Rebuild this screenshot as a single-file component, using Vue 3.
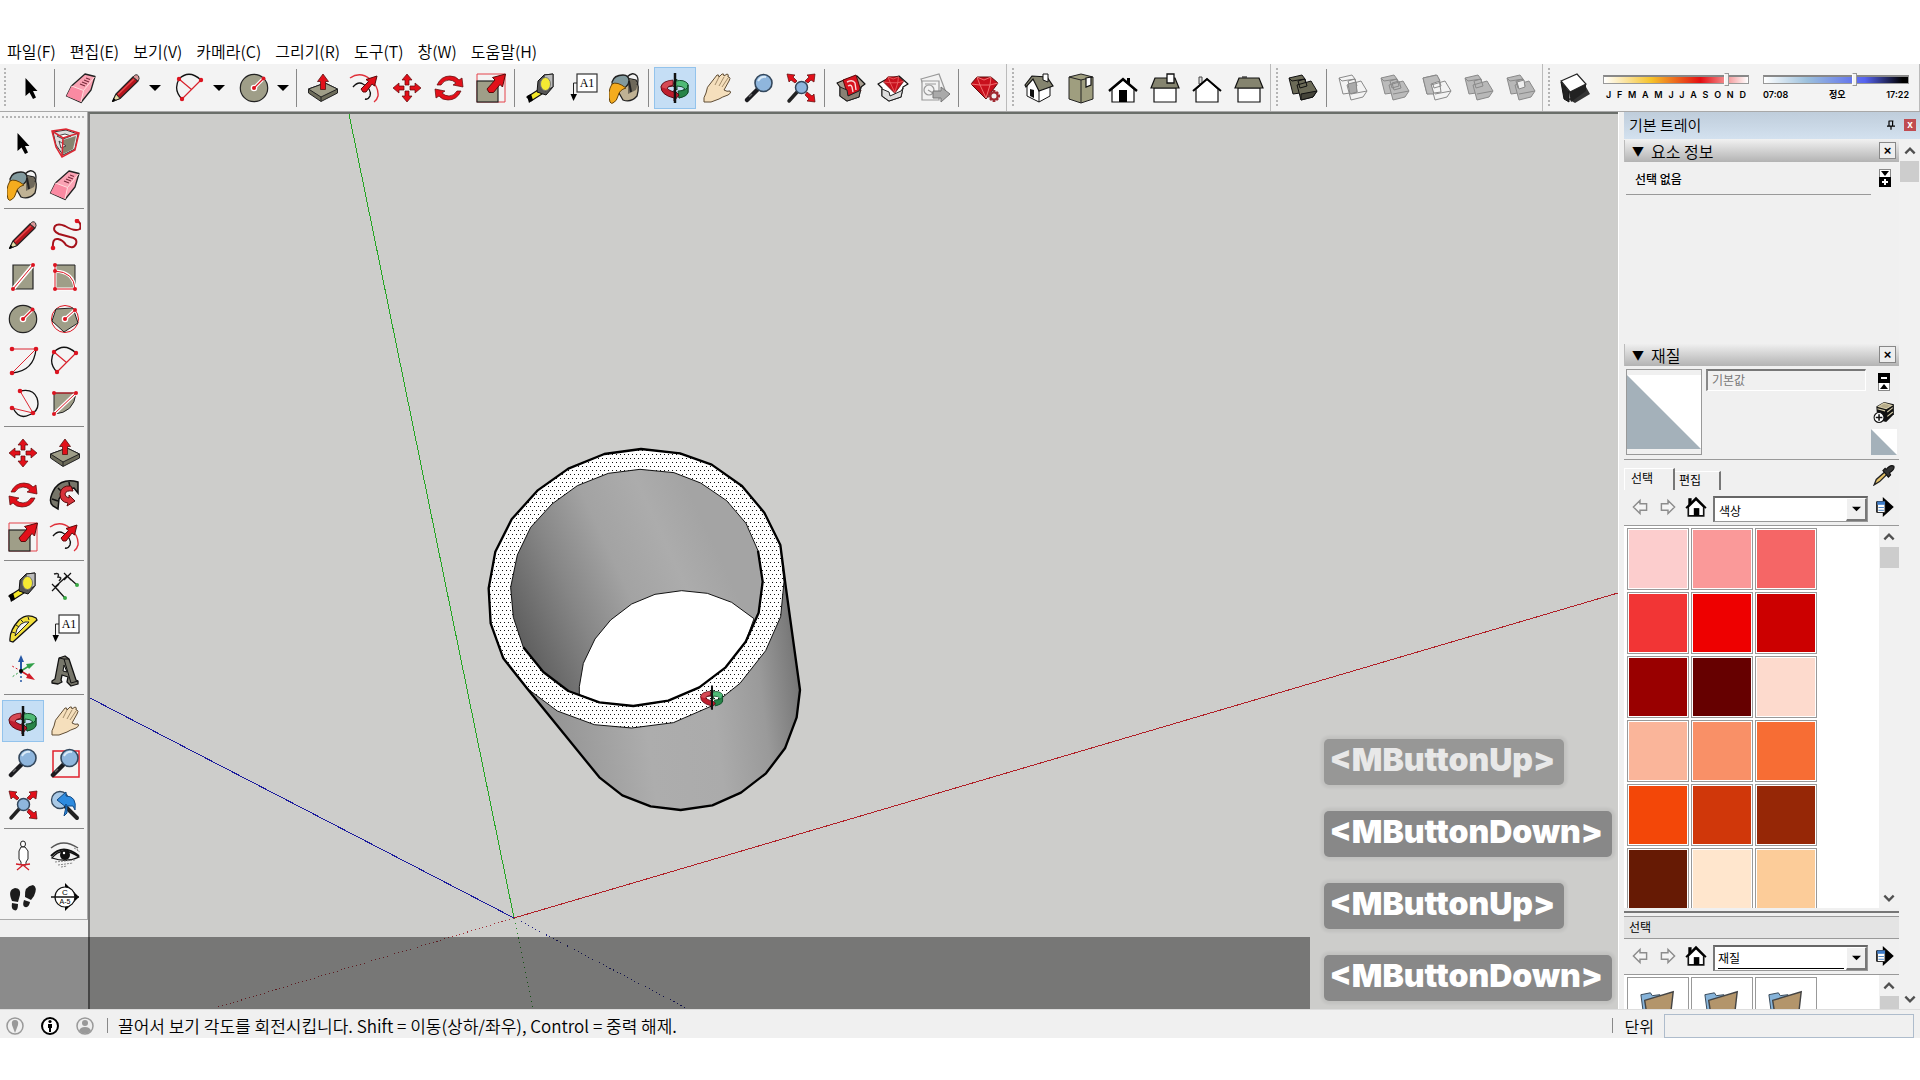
<script setup>
import { ref } from 'vue'

const menus = ['파일(F)', '편집(E)', '보기(V)', '카메라(C)', '그리기(R)', '도구(T)', '창(W)', '도움말(H)']

const bars = [
  [
    ['select'],
    ['eraser', 'pencil+', 'arc+', 'circle+'],
    ['push', 'offset', 'move', 'rotate', 'scale'],
    ['tape', 'label', 'bucket'],
    ['orbit', 'hand', 'zoom', 'extents'],
    ['warehouse', 'extwarehouse', 'share'],
    ['ruby'],
  ],
  [['iso', 'top', 'front', 'right', 'back', 'left']],
  [['shell'], ['intersect', 'union', 'subtract', 'trim', 'split']],
]

const palette = [
  ['select', 'component', 'bucket', 'eraser'],
  ['pencil', 'freehand', 'rect', 'rotrect', 'circle', 'polygon', 'arc1', 'arc', 'arc3', 'pie'],
  ['move', 'push', 'rotate', 'follow', 'scale', 'offset'],
  ['tape', 'dim', 'protractor', 'label', 'axes', 'text3d'],
  ['orbit', 'hand', 'zoom', 'zoomwin', 'extents', 'previous'],
  ['position', 'look', 'walk', 'section'],
]

const months = 'JFMAMJJASOND'.split('')
const month = ref(86)
const time = ref(63)

const colors = [
  '#fccdcd', '#fa9999', '#f56666', '#f23535', '#ee0000', '#cc0000',
  '#990000', '#660000', '#fddacd', '#fab59a', '#f99067', '#f76d34',
  '#f34708', '#d0370a', '#962706', '#661a04', '#ffe6cd', '#fccc99',
]

const keys = [
  { text: '<MButtonUp>', faded: true },
  { text: '<MButtonDown>' },
  { text: '<MButtonUp>' },
  { text: '<MButtonDown>' },
]
</script>

<template>
  <svg class="sprite" aria-hidden="true">
    <symbol id="i-select" viewBox="0 0 32 32"><path d="M10.500 6V24L14.500 20.500L18 27L21 25.500L18 19H22.500Z" fill="#000" /></symbol>
    <symbol id="i-eraser" viewBox="0 0 32 32">
      <path d="M20 2L30 4.500L26 18L16 30.500L1.500 24L6.500 14Z" fill="#fba3b4" stroke="#222" stroke-width="1.300" stroke-linejoin="round" />
      <path d="M6.500 14L18.500 18.500L16 30L1.500 24Z" fill="#fa8aa2" />
      <path d="M6.500 14L18.500 18.500L29.500 5M18.500 18.500L16 30" fill="none" stroke="#fdd" stroke-width="1" />
      <path d="M15 12l5 2m-3-4l5 2m-3-4l5 2m-3-4l4 1.500" stroke="#7a2c3c" stroke-width="1.200" fill="none" />
    </symbol>
    <symbol id="i-pencil" viewBox="0 0 32 32">
      <path d="M2.500 29.500L6 22L23 5L28 9L10 26.500Z" fill="#b5141c" stroke="#222" stroke-width="1.200" stroke-linejoin="round" />
      <path d="M8 22.500L24 7" stroke="#e8474a" stroke-width="1.500" />
      <path d="M23 5Q26 1 28.500 4Q30 7 28 9Z" fill="#d99" stroke="#333" />
      <path d="M2.500 29.500L6 22L10 26.500Z" fill="#e5dba5" stroke="#222" /><path d="M2 30l1.500-4 2.500 2z" />
    </symbol>
    <symbol id="i-arc" viewBox="0 0 32 32">
      <path d="M8 27Q-1 18 5 7Q15 -3 27 8" fill="none" stroke="#111" stroke-width="1.300" />
      <path d="M27 8L8 27M5 7L17.500 17.500" stroke="#d8222c" stroke-width="1.200" />
      <g fill="#dc1420"><circle cx="5" cy="7" r="2.200" /><circle cx="27" cy="8" r="2.200" /><circle cx="8" cy="27" r="2.200" /></g>
    </symbol>
    <symbol id="i-circle" viewBox="0 0 32 32">
      <circle cx="16" cy="16" r="13.700" fill="#9f9e88" stroke="#222" stroke-width="1.200" />
      <path d="M16 16L25.500 6.500" stroke="#fff" stroke-width="3.500" /><circle cx="16" cy="16" r="3.300" fill="#fff" />
      <path d="M16 16L25.500 6.500" stroke="#dc1420" stroke-width="1.200" />
      <g fill="#dc1420"><circle cx="16" cy="16" r="2" /><circle cx="25.500" cy="6.500" r="2" /></g>
    </symbol>
    <symbol id="i-push" viewBox="0 0 32 32">
      <path d="M1.500 17L18 11L30.500 17V21L14 29.500L1.500 21Z" fill="#6d6c5a" stroke="#222" stroke-linejoin="round" />
      <path d="M1.500 17L18 11L30.500 17L14 25Z" fill="#9f9e88" stroke="#222" stroke-linejoin="round" /><path d="M14 25V29" stroke="#222" />
      <path d="M13.500 17.500V9.500H10.500L16 2L21.500 9.500H18.500V17.500Z" fill="#e2101a" stroke="#511" stroke-width=".8" />
    </symbol>
    <symbol id="i-bigarrow" viewBox="0 0 32 32"><path d="M12 17L20 8L17.500 5.500L30.500 2L27.500 15L25 12.500L18.500 20.500H14Z" fill="#e2101a" stroke="#5a0a0a" stroke-linejoin="round" /></symbol>
    <symbol id="i-offset" viewBox="0 0 32 32">
      <path d="M1 6Q11 -1 21 7Q30 15 29 24Q28 28 25 30" fill="none" stroke="#e0303a" stroke-width="1.400" />
      <path d="M4 15Q9 9 14 12Q23 17 21 24Q19 28 16 27" fill="none" stroke="#111" stroke-width="1.400" />
      <path d="M12 17L19.500 9.500L17 7.500L28 4L25.500 14L23 12L17 20H14Z" fill="#e2101a" stroke="#5a0a0a" stroke-linejoin="round" />
    </symbol>
    <symbol id="i-move" viewBox="0 0 32 32">
      <g fill="#e2101a" stroke="#5a0a0a" stroke-width=".7">
        <path d="M16 2L21 8H18V13H14V8H11Z" /><path d="M16 2L21 8H18V13H14V8H11Z" transform="rotate(90 16 16)" /><path d="M16 2L21 8H18V13H14V8H11Z" transform="rotate(180 16 16)" /><path d="M16 2L21 8H18V13H14V8H11Z" transform="rotate(270 16 16)" />
      </g>
    </symbol>
    <symbol id="i-rotate" viewBox="0 0 32 32">
      <g fill="#e2101a" stroke="#5a0a0a" stroke-width=".7" stroke-linejoin="round">
        <path d="M4 13Q8 4 17 4Q23 4 26 8L29 6L30 15L20 13L23 11Q20 8 16 8Q11 8 8 13Z" /><path d="M4 13Q8 4 17 4Q23 4 26 8L29 6L30 15L20 13L23 11Q20 8 16 8Q11 8 8 13Z" transform="rotate(180 16 16)" />
      </g>
    </symbol>
    <symbol id="i-scale" viewBox="0 0 32 32">
      <path d="M2 2H30V30H2Z" fill="none" stroke="#e4424a" /><rect x="2" y="9" width="21" height="21" fill="#9f9e88" stroke="#222" stroke-width="1.200" />
      <use href="#i-bigarrow" width="32" height="32" />
    </symbol>
    <symbol id="i-tape" viewBox="0 0 32 32">
      <path d="M2 25L13 18L17 22L6 29Z" fill="#f3e72a" stroke="#111" stroke-width="1.300" /><path d="M2 24L6 22L8 28L4 31Z" />
      <path d="M13 9L19 3L28 2L28 15L21 23L12 20Z" fill="#555" stroke="#111" stroke-linejoin="round" /><path d="M19 3L28 2V15L20 19Z" fill="#bbb" stroke="#222" />
      <ellipse cx="20.500" cy="12" rx="5" ry="6.500" fill="#f5ea32" stroke="#777" />
    </symbol>
    <symbol id="i-label" viewBox="0 0 32 32">
      <rect x="10" y="2" width="20" height="18" fill="#fff" stroke="#333" stroke-width="1.200" />
      <path d="M10 11H6.500V24" fill="none" stroke="#222" /><path d="M3.500 22H10L6.500 29Z" />
      <text x="20" y="15" font-family="Liberation Serif, serif" font-size="12" text-anchor="middle">A1</text>
    </symbol>
    <symbol id="i-bucket" viewBox="0 0 32 32">
      <path d="M12 5L27 8Q31 14 28 24Q22 31 14 28L6 14Z" fill="#c0b294" stroke="#222" stroke-width="1.300" />
      <path d="M19 6L27 9Q29 14 27 18L19 22Z" fill="#6e685a" />
      <path d="M3 10Q5 3 14 3Q20 3 20 9Q19 17 9 17Q3 16 3 10Z" fill="#829a9e" stroke="#222" stroke-width="1.300" />
      <path d="M18 5Q24 -1 28 4Q30 8 28 13" fill="none" stroke="#222" stroke-width="1.300" />
      <path d="M1 30Q-2 20 3 12Q8 9 17 16Q10 18 9 24Q8 29 4 31Q2 32 1 30Z" fill="#f5ac1e" stroke="#66430a" />
      <path d="M20 9L22 20" stroke="#222" stroke-width="2" />
    </symbol>
    <symbol id="i-orbit" viewBox="0 0 32 32">
      <path d="M17 9Q25 7 29 12V20Q29 23 20 26V20L26 17Q24 14 18 14V18L13 13L18 7Z" fill="#4fba76" stroke="#134d2a" />
      <path d="M19 19Q29 19 29 13V20Q29 24 20 26Z" fill="#278448" stroke="#134d2a" />
      <path d="M14 9Q3 9 2 15Q2 23 15 26V29L20 23L15 18V20Q8 18 8 15L14 14Z" fill="#be1e2e" stroke="#5a0a14" />
      <path d="M2 15Q3 9 14 8V13Q8 14 8 17" fill="#d64a55" stroke="#5a0a14" stroke-width=".7" />
      <path d="M16 1V31" stroke="#111" stroke-width="2.500" />
    </symbol>
    <symbol id="i-hand" viewBox="0 0 32 32"><path d="M3 30Q2 26 5 21Q6 14 9 12L16 3Q18 2 18 5L21 2Q23 1 23 4L26 2Q28 2 27 5L28 5Q30 6 28 9L23 18Q26 20 29 19Q31 21 27 23Q21 25 18 27L10 30Z" fill="#f5dfbc" stroke="#5e4c35" stroke-linejoin="round" /><path d="M14 13L18 5M18 14L23 5M21 15L27 6" stroke="#8c7554" stroke-width=".8" /></symbol>
    <symbol id="i-zoom" viewBox="0 0 32 32">
      <path d="M14 18L4 28" stroke="#1b1b1f" stroke-width="4.500" stroke-linecap="round" /><path d="M9 22L6 25" stroke="#666" stroke-width="1.500" />
      <circle cx="20.500" cy="11" r="8.500" fill="#8fb6dd" stroke="#33475c" stroke-width="1.600" /><path d="M15 9Q18 4 23 5" stroke="#d9eaf8" stroke-width="2" fill="none" />
    </symbol>
    <symbol id="i-extents" viewBox="0 0 32 32">
      <path d="M13 19L4 29" stroke="#222" stroke-width="3.500" stroke-linecap="round" /><circle cx="16.500" cy="15.500" r="6" fill="#8fb6dd" stroke="#33475c" stroke-width="1.500" />
      <g fill="#e2101a" stroke="#5a0a0a" stroke-width=".7"><path d="M2 2L10 3L8 5L12 9L10 11L6 8L4 10Z" /><path d="M30 2L29 10L26 8L23 11L20 9L24 5L22 3Z" /><path d="M30 30L22 29L24 27L20 23L22 20L27 24L29 22Z" /></g>
    </symbol>
    <symbol id="i-warehouse" viewBox="0 0 32 32">
      <path d="M2 11L9 8L22 4L30 12L26 15L24 25L12 29L5 24L5 15Z" fill="#a79d90" stroke="#111" stroke-width="1.200" stroke-linejoin="round" />
      <path d="M8 8L21 3L26 19L13 24Z" fill="#d8121e" stroke="#5a0a0a" /><path d="M12 10Q18 7 20 11L21 18M13 14Q16 12 17 15L18 20" stroke="#fbd5d5" stroke-width="1.400" fill="none" />
      <path d="M5 15L12 18L13 24L24 19L26 15L24 25L12 29L5 24Z" fill="#8a8174" stroke="#222" stroke-linejoin="round" />
    </symbol>
    <symbol id="i-gem" viewBox="0 0 32 32"><path d="M2 12L8 5H22L29 11L17 27Z" fill="#c8101c" stroke="#5a0a0a" stroke-linejoin="round" /><path d="M2 12L11 13L21 13L29 11M8 5L11 13L17 26L21 13L22 5L15 8Z" stroke="#f57878" stroke-width=".9" fill="none" /></symbol>
    <symbol id="i-extwarehouse" viewBox="0 0 32 32">
      <path d="M1 12L8 8L22 4L31 12L26 15L24 25L12 29L5 24L5 16Z" fill="#fff" stroke="#111" stroke-width="1.200" stroke-linejoin="round" /><use href="#i-gem" x="4" y="1" width="26" height="24" /><path d="M5 17L12 20L13 24L24 19L26 16L24 25L12 29L5 24Z" fill="#ddd" stroke="#222" stroke-linejoin="round" />
    </symbol>
    <symbol id="i-share" viewBox="0 0 32 32">
      <g fill="#f2f2f2" stroke="#999" stroke-width="1.200"><path d="M2 7L20 2L26 18L8 24Z" /><path d="M3 9H20V28H3Z" /><circle cx="10" cy="18" r="5" /><path d="M6 12H17M9 18L14 21" /></g><path d="M14 19H22V15L31 22L22 30V26H14Z" fill="#aaa" stroke="#777" />
    </symbol>
    <symbol id="i-ruby" viewBox="0 0 32 32">
      <use href="#i-gem" width="32" height="32" /><path d="M25 18V30M19 24H31M21 20L29 28M29 20L21 28" stroke="#a12b32" stroke-width="2.800" /><circle cx="25" cy="24" r="3.500" fill="#f0f0f0" stroke="#a12b32" stroke-width="2" />
    </symbol>
    <symbol id="i-iso" viewBox="0 0 32 32"><path d="M4 12L4 24L16 30L27 24V14L11 5Z" fill="#fff" stroke="#111" /><path d="M16 17V30" stroke="#111" /><path d="M2 13L9 4L24 5L30 14L16 19L10 7L3 15Z" fill="#85846f" stroke="#111" stroke-width="1.200" /><path d="M7 17L11 18V26L7 24Z" fill="#111" /><path d="M20 2H25V10L20 8Z" fill="#fff" stroke="#111" /></symbol>
    <symbol id="i-top" viewBox="0 0 32 32"><path d="M4 5L16 2L28 5V27L16 31L4 27Z" fill="#9f9e7f" stroke="#222" /><path d="M4 5L16 8L28 5M16 8V31" stroke="#222" fill="none" /><path d="M21 6L26 5V13L21 15Z" fill="#fff" stroke="#111" stroke-width="1.200" /></symbol>
    <symbol id="i-front" viewBox="0 0 32 32"><path d="M20 6H23V12H20Z" /><path d="M5 17V30H27V17L16 8Z" fill="#fff" stroke="#111" stroke-width="1.200" /><path d="M2 19L16 7L30 19" fill="none" stroke="#000" stroke-width="2.400" /><path d="M12 18H20V30H12Z" /></symbol>
    <symbol id="i-right" viewBox="0 0 32 32"><path d="M5 16H27V30H5Z" fill="#fff" stroke="#111" stroke-width="1.200" /><path d="M6 6H26L30 16H2Z" fill="#85846f" stroke="#111" stroke-width="1.200" /><path d="M18 2H25V11H18Z" fill="#fff" stroke="#111" stroke-width="1.300" /></symbol>
    <symbol id="i-back" viewBox="0 0 32 32"><path d="M8 5H11V12H8Z" fill="#ddd" stroke="#444" /><path d="M5 17V30H27V17L16 7Z" fill="#fff" stroke="#111" stroke-width="1.200" /><path d="M2 19L16 7L30 19" fill="none" stroke="#000" stroke-width="2" /></symbol>
    <symbol id="i-left" viewBox="0 0 32 32"><path d="M9 4H14V8H9Z" fill="#777" /><path d="M5 16H27V30H5Z" fill="#fff" stroke="#111" stroke-width="1.200" /><path d="M6 6H26L30 16H2Z" fill="#85846f" stroke="#111" stroke-width="1.200" /></symbol>
    <symbol id="i-shell" viewBox="0 0 32 32"><g fill="#6b6a57" stroke="#111" stroke-linejoin="round"><path d="M2 6L15 3L18 7L20 20L6 22Z" /><path d="M10 13L24 9L30 19L26 25L14 28Z" /><path d="M14 22L30 19L26 25L14 28Z" fill="#45443a" /><path d="M2 6L5 9L18 7M11 9L18 7L20 14L13 16Z" fill="none" /></g></symbol>
    <symbol id="i-cubes" viewBox="0 0 32 32"><g stroke="#8a8a8a" stroke-linejoin="round"><path d="M2 6L15 3L18 7L20 20L6 22Z" /><path d="M10 13L24 9L30 19L26 25L14 28Z" /><path d="M14 22L30 19M2 6L5 9L18 7M11 9L18 7L20 14L13 16Z" fill="none" /></g></symbol>
    <symbol id="i-intersect" viewBox="0 0 32 32"><use href="#i-cubes" width="32" height="32" fill="none" /><path d="M11 12L19 10L20 20L13 22Z" fill="#aaa" stroke="#888" /></symbol>
    <symbol id="i-union" viewBox="0 0 32 32"><use href="#i-cubes" width="32" height="32" fill="#bbb" /><path d="M13 11L20 9L22 16L15 18Z" fill="none" stroke="#888" /></symbol>
    <symbol id="i-subtract" viewBox="0 0 32 32"><use href="#i-cubes" width="32" height="32" fill="none" /><path d="M2 6L16 3L19 9L10 12L13 22H6Z" fill="#bbb" stroke="#888" /></symbol>
    <symbol id="i-trim" viewBox="0 0 32 32"><use href="#i-cubes" width="32" height="32" fill="#b8b8b8" /></symbol>
    <symbol id="i-split" viewBox="0 0 32 32"><use href="#i-cubes" width="32" height="32" fill="#b8b8b8" /><path d="M12 10L19 8L20 15L14 17Z" fill="#eee" stroke="#888" /></symbol>
    <symbol id="i-shadow" viewBox="0 0 32 32"><path d="M14 25L27 15L31 22L16 31L9 27Z" fill="#333" /><path d="M2 10L10 20V30L5 27Z" fill="#222" stroke="#111" /><path d="M10 20L27 12V19L12 30Z" fill="#222" /><path d="M2 9L18 2L27 12L11 20Z" fill="#fff" stroke="#222" stroke-width="1.200" /></symbol>

    <symbol id="i-component" viewBox="0 0 32 32"><path d="M4 5L17 3L29 7L26 22L14 28L7 18Z" fill="#ddd" stroke="#333" /><path d="M14 13L27 9L24 22L14 27Z" fill="#85846f" /><path d="M8 9L16 7L22 9L14 12ZM10 14L17 19L12 21Z" fill="#fff" stroke="#444" /><path d="M3 4L17 2L30 6L26 23L13 30L7 20ZM3 4L14 11L30 6M14 11L13 30" fill="none" stroke="#dc2732" stroke-width="1.500" /></symbol>
    <symbol id="i-freehand" viewBox="0 0 32 32"><path d="M4 29Q3 19 9 20Q14 21 17 26Q24 31 27 25Q29 19 21 18L10 15Q3 12 6 7Q9 4 16 7Q26 13 31 10Q33 4 28 2" fill="none" stroke="#a5121b" stroke-width="2" /><circle cx="4" cy="29" r="2.300" fill="#dc1420" /><circle cx="28" cy="2" r="2.300" fill="#dc1420" /></symbol>
    <symbol id="i-rect" viewBox="0 0 32 32"><path d="M6 4H26V28H6Z" fill="#9f9e88" stroke="#222" stroke-width="1.200" /><path d="M6 28L26 4" stroke="#fff" stroke-width="4" /><path d="M6 28L26 4" stroke="#dc1420" /><circle cx="6" cy="28" r="2" fill="#dc1420" /><circle cx="26" cy="4" r="2" fill="#dc1420" /></symbol>
    <symbol id="i-rotrect" viewBox="0 0 32 32"><path d="M6 4H26V28H6Z" fill="#9f9e88" stroke="#222" /><path d="M6 4V28H26Q25 11 6 10" fill="none" stroke="#fff" stroke-width="3" /><path d="M6 4V28H26Q25 11 6 10" fill="none" stroke="#dc1420" /><g fill="#dc1420"><circle cx="6" cy="4" r="2" /><circle cx="6" cy="10" r="2" /><circle cx="6" cy="28" r="2" /><circle cx="26" cy="28" r="2" /></g></symbol>
    <symbol id="i-polygon" viewBox="0 0 32 32"><circle cx="16" cy="16" r="13.500" fill="none" stroke="#dc1420" /><path d="M7 6L24 5L29 20L15 29L3 18Z" fill="#9f9e88" stroke="#222" /><path d="M16 16L26 7" stroke="#fff" stroke-width="3.500" /><circle cx="16" cy="16" r="3.300" fill="#fff" /><path d="M16 16L26 7" stroke="#dc1420" /><circle cx="16" cy="16" r="2" fill="#dc1420" /><circle cx="26" cy="7" r="2" fill="#dc1420" /></symbol>
    <symbol id="i-arc1" viewBox="0 0 32 32"><path d="M29 4Q27 26 5 28" fill="none" stroke="#111" stroke-width="1.300" /><path d="M5 4H29L5 28" fill="none" stroke="#dc2732" /><g fill="#dc1420"><circle cx="5" cy="4" r="2.300" /><circle cx="29" cy="4" r="2.300" /><circle cx="5" cy="28" r="2.300" /></g></symbol>
    <symbol id="i-arc3" viewBox="0 0 32 32"><path d="M13 4Q26 1 30 11Q34 24 22 28Q12 33 6 21" fill="none" stroke="#111" stroke-width="1.300" /><path d="M13 4L26 26L5 21" fill="none" stroke="#dc2732" /><g fill="#dc1420"><circle cx="13" cy="4" r="2.300" /><circle cx="5" cy="21" r="2.300" /><circle cx="26" cy="26" r="2.300" /></g></symbol>
    <symbol id="i-pie" viewBox="0 0 32 32"><path d="M5 6H27Q25 26 5 27Z" fill="#9f9e88" stroke="#222" /><path d="M5 27L27 6" stroke="#fff" stroke-width="3.500" /><path d="M5 6H27L5 27" fill="none" stroke="#dc1420" /><g fill="#dc1420"><circle cx="5" cy="6" r="2" /><circle cx="27" cy="6" r="2" /><circle cx="5" cy="27" r="2" /></g></symbol>
    <symbol id="i-follow" viewBox="0 0 32 32"><path d="M29 3Q14 -1 6 9Q-2 22 4 27L9 30L10 20Q16 9 25 9L29 14Z" fill="#77766a" stroke="#111" stroke-width="1.500" /><path d="M3 20L9 22M9 9L14 14M20 3L21 9" stroke="#111" stroke-width="1.500" /><path d="M22 7Q12 6 11 15Q11 23 19 24L18 27L26 22L20 16V19Q16 18 16 15Q17 11 24 12Z" fill="#d8323a" stroke="#5a0a0a" /></symbol>
    <symbol id="i-dim" viewBox="0 0 32 32"><path d="M6 16L18 5M18 5L28 14M6 16L16 27M3 13L10 20M3 20L10 13M15 2L22 9M15 9L22 2" stroke="#111" stroke-width="1.200" /><circle cx="28" cy="14" r="2" fill="#3aa845" /><circle cx="16" cy="27" r="2" fill="#3aa845" /><path d="M5 3Q11 1 9 6Q14 6 10 10" fill="none" stroke="#222" stroke-width="1.500" /></symbol>
    <symbol id="i-protractor" viewBox="0 0 32 32"><path d="M3 28Q2 18 12 7Q20 0 29 5L30 7Q18 18 6 29Z" fill="#f1df3a" stroke="#111" stroke-width="1.300" /><path d="M8 23Q9 15 14 11Q18 8 22 9Z" fill="#f3f3f3" stroke="#222" /><path d="M5 19L8 20M9 12L12 14M14 7L16 9M21 4L22 7" stroke="#222" /></symbol>
    <symbol id="i-axes" viewBox="0 0 32 32"><path d="M14 16V5" stroke="#2557a5" stroke-width="2" /><path d="M11 7L14 0L17 7Z" fill="#2557a5" /><path d="M14 16L22 11" stroke="#31a048" stroke-width="1.500" /><path d="M19 9L28 8L22 14Z" fill="#31a048" /><path d="M14 16L22 21" stroke="#d21c28" stroke-width="1.500" /><path d="M22 18L28 25L19 23Z" fill="#d21c28" /><path d="M14 16L5 11" stroke="#d21c28" stroke-dasharray="2 2" /><path d="M14 16L5 22" stroke="#31a048" stroke-dasharray="2 2" /><path d="M14 17V28" stroke="#2557a5" stroke-width="1.500" stroke-dasharray="2 2" /><circle cx="14" cy="16" r="2" /></symbol>
    <symbol id="i-text3d" viewBox="0 0 32 32"><path d="M3 26L6 24L10 3L16 1L20 4L27 25L29 26V29L22 31L18 27L19 22L13 20L12 25L13 27L9 29L3 28Z" fill="#77766a" stroke="#111" stroke-width="1.300" stroke-linejoin="round" /><path d="M14 16L15 10L18 17Z" fill="#eee" stroke="#111" /><path d="M10 3L15 4L22 28L29 26M15 4L20 4" stroke="#111" fill="none" /></symbol>
    <symbol id="i-zoomwin" viewBox="0 0 32 32"><path d="M4 4H30V30H4Z" fill="none" stroke="#e0202c" stroke-width="1.500" /><use href="#i-zoom" width="32" height="32" /></symbol>
    <symbol id="i-previous" viewBox="0 0 32 32"><circle cx="11" cy="11" r="8.500" fill="#a9c9e6" stroke="#33475c" stroke-width="1.300" /><path d="M17 18L28 29" stroke="#222" stroke-width="4" stroke-linecap="round" /><path d="M8 11L17 3V7Q28 7 26 21L24 17H18V24L15 27Q17 19 17 15V18Z" fill="#2d8be0" stroke="#114a86" /></symbol>
    <symbol id="i-position" viewBox="0 0 32 32"><ellipse cx="16" cy="5" rx="2.500" ry="3" fill="#fff" stroke="#222" /><path d="M14 8L12 12V20L14 23V26H19V23L21 20V12L18 8Z" fill="#fff" stroke="#222" /><path d="M9 25L16 26L23 25M10 31L16 26L22 31" fill="none" stroke="#d21c28" stroke-width="1.300" /></symbol>
    <symbol id="i-look" viewBox="0 0 32 32"><path d="M2 9Q14 -1 29 9" fill="none" stroke="#555" stroke-width="1.500" /><path d="M3 19Q13 6 30 18Q18 24 3 19Z" fill="#eee" stroke="#111" stroke-width="1.300" /><path d="M2 17Q14 4 30 17" fill="none" stroke="#111" stroke-width="2" /><circle cx="16" cy="16" r="5" fill="#111" /><circle cx="15" cy="14" r="1.200" fill="#fff" /><path d="M6 23L26 21M9 26L24 24M12 28L18 27M28 11L31 13M25 9L29 11" stroke="#888" stroke-width="1" stroke-dasharray="2 1" /></symbol>
    <symbol id="i-walk" viewBox="0 0 32 32"><path d="M5 20Q0 9 8 7Q14 7 13 14L11 21ZM5 22L11 23Q11 31 7 29Q4 28 5 22Z" fill="#1c1c1c" /><path d="M18 16Q17 5 26 4Q31 6 27 15L24 19ZM17 19L23 21Q22 27 18 26Q15 25 17 19Z" fill="#1c1c1c" /></symbol>
    <symbol id="i-section" viewBox="0 0 32 32"><path d="M16 2L30 16L16 30Z" /><circle cx="16" cy="16" r="10" fill="#fff" stroke="#111" stroke-width="1.200" /><path d="M2 16H30" stroke="#111" stroke-width="1.500" /><text x="16" y="14" font-size="8" font-family="Liberation Sans, sans-serif" text-anchor="middle">C</text><text x="16" y="23" font-size="7" font-family="Liberation Sans, sans-serif" text-anchor="middle">A-5</text></symbol>

    <symbol id="i-home" viewBox="0 0 20 20"><path d="M3 2H6V8H3Z" /><path d="M3 10V18H17V10L10 3Z" fill="#fff" stroke="#111" stroke-width="1.500" /><path d="M1 11L10 2L19 11" fill="none" stroke="#000" stroke-width="1.800" /><path d="M8 11H13V18H8Z" /></symbol>
    <symbol id="i-prev" viewBox="0 0 20 20"><path d="M4 10L10 4V7H16V13H10V16Z" fill="#f4f4f4" stroke="#8c8c8c" stroke-width="1.300" /></symbol>
    <symbol id="i-next" viewBox="0 0 20 20"><path d="M16 10L10 4V7H4V13H10V16Z" fill="#f4f4f4" stroke="#8c8c8c" stroke-width="1.300" /></symbol>
    <symbol id="i-details" viewBox="0 0 20 20"><path d="M8 1L18 10L8 19V15H2V5H8Z" /><rect x="3" y="5" width="7" height="10" fill="#fff" stroke="#222" stroke-width=".8" /><rect x="3" y="5" width="7" height="3" fill="#3d7cc9" /><path d="M4 10.500H9M4 13H9" stroke="#4d86c8" /></symbol>
    <symbol id="i-dropper" viewBox="0 0 20 20"><path d="M1 19L3 14L11 7L13 9L6 16Z" fill="#e3c067" stroke="#222" stroke-width="1.200" /><path d="M9 6L11 4L12 5Q16 0 19 2Q20 5 15 8L16 10L14 12Z" fill="#333" stroke="#111" /></symbol>
    <symbol id="i-create" viewBox="0 0 20 20"><path d="M3 5L10 1L19 3V12L12 19L4 17Z" fill="#111" /><path d="M5 5L10 2L17 4L12 7ZM4 7L11 9M13 10L18 6M13 14L18 10" fill="#b7ac8a" stroke="#d4cba8" stroke-width="1" /><circle cx="5.500" cy="15" r="4.500" fill="#fff" stroke="#111" /><path d="M5.500 12V18M2.500 15H8.500" stroke="#111" stroke-width="1.400" /></symbol>
    <symbol id="i-swatch" viewBox="0 0 26 26"><path d="M0 0H26V26H0Z" fill="#fff" /><path d="M0 0L26 26H0Z" fill="#a4b1ba" /></symbol>
    <symbol id="i-up" viewBox="0 0 12 12"><path d="M2 8L6 4L10 8" fill="none" stroke="#505050" stroke-width="2" /></symbol>
    <symbol id="i-down" viewBox="0 0 12 12"><path d="M2 4L6 8L10 4" fill="none" stroke="#505050" stroke-width="2" /></symbol>
    <symbol id="i-caret" viewBox="0 0 12 8"><path d="M0 1H12L6 7Z" fill="#000" /></symbol>
    <symbol id="i-folder" viewBox="0 0 40 40"><path d="M2 6L12 4L14 7L22 6V36H6Z" fill="#86b3d9" stroke="#345" /><path d="M6 12L36 3L32 38H10Z" fill="#b3956b" stroke="#444" stroke-width="1.500" /></symbol>
  </svg>

  <div class="app">
    <nav class="menus"><button v-for="m in menus" :key="m">{{ m }}</button></nav>

    <header class="toolbar">
      <div v-for="(bar, b) in bars" :key="b" class="bar">
        <i class="grip"></i>
        <template v-for="(group, g) in bar" :key="g">
          <i v-if="g" class="sep"></i>
          <template v-for="t in group" :key="t">
            <div v-if="t.endsWith('+')" class="split">
              <button class="tool" :aria-label="t"><svg><use :href="'#i-' + t.slice(0, -1)" /></svg></button>
              <button class="drop" aria-label="more"><svg><use href="#i-caret" /></svg></button>
            </div>
            <button v-else class="tool" :class="{ on: t === 'orbit' }" :aria-label="t"><svg><use :href="'#i-' + t" /></svg></button>
          </template>
        </template>
      </div>
      <div class="bar shadows">
        <i class="grip"></i>
        <button class="tool" aria-label="shadow"><svg><use href="#i-shadow" /></svg></button>
        <label class="slide months">
          <input v-model="month" type="range" min="0" max="100">
          <span class="scale"><span v-for="(m, i) in months" :key="i">{{ m }}</span></span>
        </label>
        <label class="slide times">
          <input v-model="time" type="range" min="0" max="100">
          <span class="scale"><span>07:08</span><span>정오</span><span>17:22</span></span>
        </label>
      </div>
    </header>

    <main class="work">
      <aside class="side">
        <div class="palette">
          <i class="hgrip"></i>
          <template v-for="(group, g) in palette" :key="g">
            <i v-if="g" class="hsep"></i>
            <div class="grid">
              <button v-for="t in group" :key="t" class="tool" :class="{ on: t === 'orbit' }" :aria-label="t"><svg><use :href="'#i-' + t" /></svg></button>
            </div>
          </template>
        </div>
      </aside>

      <section class="view">
        <svg class="scene" viewBox="90 114 1528 895" preserveAspectRatio="xMidYMid slice">
          <defs>
            <linearGradient id="inside" x1="0" y1="0.65" x2="0.8" y2="0.3">
              <stop offset="0" stop-color="#5e5e5e" />
              <stop offset="0.3" stop-color="#868686" />
              <stop offset="0.55" stop-color="#a3a3a3" />
              <stop offset="0.8" stop-color="#acacac" />
              <stop offset="1" stop-color="#a4a4a4" />
            </linearGradient>
            <linearGradient id="outside" x1="0" y1="0" x2="1" y2="-0.12">
              <stop offset="0" stop-color="#949494" />
              <stop offset="0.35" stop-color="#adadad" />
              <stop offset="0.6" stop-color="#ababab" />
              <stop offset="0.78" stop-color="#9a9a9a" />
              <stop offset="0.9" stop-color="#7c7c7c" />
              <stop offset="1" stop-color="#5c5c5c" />
            </linearGradient>
            <pattern id="dots" width="12" height="24" patternUnits="userSpaceOnUse">
              <rect width="12" height="24" fill="#fff" />
              <rect x="0" y="0" width="3" height="3" fill="#111" />
              <rect x="6" y="12" width="3" height="3" fill="#111" />
            </pattern>
          </defs>
          <g fill="none" shape-rendering="crispEdges">
            <path d="M349 114L514 918" stroke="#25a525" />
            <path d="M90 698L514 918" stroke="#1c1c9c" />
            <path d="M514 918L1618 593" stroke="#b02028" />
            <path d="M514 918L215 1008" stroke="#a03038" stroke-dasharray="1 3" />
            <path d="M514 918L686 1008" stroke="#202080" stroke-dasharray="1 3" />
            <path d="M514 918L533 1009" stroke="#258a25" stroke-dasharray="1 4" />
          </g>
          <g transform="translate(460 430) scale(.33333)" stroke-linejoin="round">
            <path d="M961 345L978 475L1020 780L1010 862L975 955L918 1030L843 1088L757 1126L662 1140L572 1129L487 1096L418 1042L205 780L292 600Z" fill="url(#outside)" />
            <path d="M543 57L660 70L755 104L846 168L913 248L961 345L972 455L962 560L917 662L840 760L755 828L640 878L515 894L403 884L292 843L205 778L130 685L92 580L86 475L106 365L155 268L232 182L325 116L433 72Z" fill="url(#dots)" stroke="#111" stroke-width="3" />
            <path d="M540 118L642 128L722 159L800 212L858 280L894 362L908 455L896 548L857 635L797 712L718 772L625 812L520 828L418 817L325 783L250 726L190 652L160 562L152 472L172 375L212 292L276 222L352 167L445 130Z" fill="url(#inside)" stroke="#111" stroke-width="3" />
            <path d="M358 794L358 770L370 700L405 627L452 570L515 522L585 493L665 482L742 490L815 517L882 566L857 635L797 712L718 772L625 812L520 828L418 817Z" fill="#fff" stroke="#111" stroke-width="3" />
            <path d="M894 362L908 455L896 548L857 635L797 712L718 772L625 812L520 828L418 817L325 783L250 726L190 652" fill="none" stroke="#000" stroke-width="7" />
            <path d="M543 57L660 70L755 104L846 168L913 248L961 345L978 475L1020 780L1010 862L975 955L918 1030L843 1088L757 1126L662 1140L572 1129L487 1096L418 1042L205 780L130 685L92 580L86 475L106 365L155 268L232 182L325 116L433 72Z" fill="none" stroke="#000" stroke-width="7" />
            <use href="#i-orbit" x="717" y="764" width="78" height="78" />
          </g>
        </svg>
        <div class="keys"><kbd v-for="(k, i) in keys" :key="i" :class="{ faded: k.faded }">{{ k.text }}</kbd></div>
      </section>

      <aside class="tray">
        <h1>기본 트레이
          <svg class="pin" viewBox="0 0 10 12"><path d="M2.500 1V7M7 1V7M2 1H8M0 7.500H10M5 8V12" stroke="#000" stroke-width="1.500" fill="none" /></svg>
          <button class="shut" aria-label="close">x</button>
        </h1>
        <div class="traybody">
          <div class="panels">
            <h2><span class="tri">▼</span>요소 정보<button aria-label="close">×</button></h2>
            <div class="info">
              <p>선택 없음</p>
              <svg class="toggle" viewBox="0 0 12 18"><rect x=".5" y=".5" width="11" height="17" fill="#fff" stroke="#888" /><path d="M2 2H10L6 7Z" /><path d="M0 8H12V18H0Z" /><path d="M6 10V16M3 13H9" stroke="#fff" stroke-width="2" /></svg>
            </div>
            <h2><span class="tri">▼</span>재질<button aria-label="close">×</button></h2>
            <div class="material">
              <div class="preview"><svg viewBox="0 0 74 74" preserveAspectRatio="none"><path d="M0 0H74V74H0Z" fill="#fff" /><path d="M0 0L74 74H0Z" fill="#a4b1ba" /></svg></div>
              <input class="name" value="기본값" aria-label="재질 이름" disabled>
              <div class="acts">
                <svg class="toggle" viewBox="0 0 12 18"><rect x=".5" y=".5" width="11" height="17" fill="#fff" stroke="#888" /><path d="M0 0H12V10H0Z" /><path d="M3 5H9" stroke="#fff" stroke-width="2" /><path d="M2 16H10L6 11Z" /></svg>
                <svg class="create"><use href="#i-create" /></svg>
                <svg class="default"><use href="#i-swatch" /></svg>
              </div>
            </div>
            <div class="tabs">
              <button class="active">선택</button><button>편집</button>
              <svg class="ic"><use href="#i-dropper" /></svg>
            </div>
            <div class="navrow">
              <svg class="ic"><use href="#i-prev" /></svg><svg class="ic"><use href="#i-next" /></svg><svg class="ic"><use href="#i-home" /></svg>
              <div class="combo"><select aria-label="재질 목록"><option>색상</option></select><i><svg><use href="#i-caret" /></svg></i></div>
              <svg class="ic"><use href="#i-details" /></svg>
            </div>
            <div class="list colors">
              <div class="cells"><button v-for="c in colors" :key="c" class="cell" :aria-label="c"><i :style="{ background: c }"></i></button></div>
              <div class="scroll"><svg><use href="#i-up" /></svg><i></i><svg class="end"><use href="#i-down" /></svg></div>
            </div>
            <div class="split-line"></div>
            <h3>선택</h3>
            <div class="navrow">
              <svg class="ic"><use href="#i-prev" /></svg><svg class="ic"><use href="#i-next" /></svg><svg class="ic"><use href="#i-home" /></svg>
              <div class="combo under"><select aria-label="보조 목록"><option>재질</option></select><i><svg><use href="#i-caret" /></svg></i></div>
              <svg class="ic"><use href="#i-details" /></svg>
            </div>
            <div class="list folders">
              <div class="cells"><button v-for="n in 3" :key="n" class="cell" aria-label="folder"><svg><use href="#i-folder" /></svg></button></div>
              <div class="scroll"><svg><use href="#i-up" /></svg><i></i></div>
            </div>
          </div>
          <div class="scroll outer"><svg><use href="#i-up" /></svg><i></i><svg class="end"><use href="#i-down" /></svg></div>
        </div>
      </aside>
      <div class="band"></div>
    </main>

    <footer class="status">
      <svg class="geo" viewBox="0 0 20 20" stroke="#999"><circle cx="10" cy="10" r="8" fill="#f0f0f0" stroke-width="1.500" /><path d="M10 17L7 9Q6 4 10 4Q14 4 13 9Z" fill="#999" stroke="none" /></svg>
      <svg class="geo" viewBox="0 0 20 20"><circle cx="10" cy="10" r="8" fill="#fff" stroke="#000" stroke-width="2" /><circle cx="10" cy="5.500" r="1.600" /><path d="M8 8H12V12H11V16H9V12H8Z" /></svg>
      <svg class="geo" viewBox="0 0 20 20"><circle cx="10" cy="10" r="8" fill="#eee" stroke="#999" stroke-width="1.500" /><circle cx="10" cy="7" r="3" fill="#999" /><path d="M4 15Q5 11 10 11Q15 11 16 15Q10 20 4 15Z" fill="#999" /></svg>
      <i class="bar1"></i>
      <span>끌어서 보기 각도를 회전시킵니다. Shift = 이동(상하/좌우), Control = 중력 해제.</span>
      <i class="bar1 push"></i>
      <label for="unit">단위</label>
      <input id="unit" type="text">
    </footer>
  </div>
</template>

<style>
body { margin: 0; background: #fff; }
</style>

<style scoped>
* { box-sizing: border-box; }
.sprite { display: none; }
button { border: 0; background: none; padding: 0; margin: 0; color: inherit; font: inherit; }
svg { display: block; flex: none; }
i { display: block; flex: none; }
h1, h2, h3, p { margin: 0; font-weight: inherit; }
.app { display: flex; flex-direction: column; height: 100vh; padding: 40px 0 42px; background: #fff; color: #000; font: 350 16px/22px "Noto Sans CJK KR", "Noto Sans", sans-serif; overflow: hidden; }

.menus { display: flex; flex: none; height: 24px; padding: 0 7px 2px; gap: 14px; }

.toolbar { display: flex; flex: none; height: 48px; background: #f3f3f3; border-bottom: 1px solid #a8a8a8; }
.bar { display: flex; align-items: center; border-right: 1px solid #bbb; }
.bar:last-child { flex: 1; }
.grip { width: 2px; height: 40px; margin: 0 4px 0 5px; background: repeating-linear-gradient(#b4b4b4 0 2px, transparent 2px 4px); }
.bar:first-child .grip { margin-left: 4px; }
.sep { width: 1px; height: 38px; margin: 0 5px 0 2px; background: #888; }
.tool { display: flex; align-items: center; justify-content: center; width: 42px; height: 42px; border: 1px solid transparent; }
.tool svg { width: 32px; height: 32px; overflow: visible; }
.tool.on { background: #c5def5; border-color: #93c3ec; }
.split { display: flex; align-items: center; width: 64px; padding-left: 3px; }
.drop { width: 16px; }
.drop svg { width: 12px; height: 8px; margin: 0 auto; }
.slide { display: flex; flex-direction: column; width: 146px; height: 29px; margin-left: 7px; }
.slide + .slide { margin-left: 14px; }
.slide input { appearance: none; width: 100%; height: 14px; margin: 0; background: none; }
.slide input::-webkit-slider-runnable-track { height: 9px; border: 1px solid #999; border-top: 2px solid #888; }
.slide input::-webkit-slider-thumb { appearance: none; width: 5px; height: 13px; margin-top: -4px; background: #f4f4f4; border: 1px solid #999; border-left-color: #fff; }
.months input::-webkit-slider-runnable-track { background: linear-gradient(90deg, #fff, #f5c22a 33%, #e40e12 67%, #fff); }
.times input::-webkit-slider-runnable-track { background: linear-gradient(90deg, #fff, #9cc0dc 30%, #5663f0 70%, #000 96%); }
.scale { display: flex; justify-content: space-between; padding: 2px 3px 0; font: 600 9px/14px Inter, "Noto Sans CJK KR", sans-serif; }
.times .scale { padding: 2px 0 0; }

.work { position: relative; display: flex; flex: 1; min-height: 0; background: #f0f0f0; }
.side { flex: none; width: 88px; }
.palette { height: 808px; padding: 4px 0 0 2px; background: #f4f4f4; border-right: 1px solid #aaa; border-bottom: 1px solid #aaa; }
.hgrip { height: 2px; margin: 0 2px 4px 0; background: repeating-linear-gradient(90deg, #b4b4b4 0 2px, transparent 2px 4px); }
.hsep { height: 1px; margin: 2px 3px 5px 2px; background: #888; }
.grid { display: grid; grid-template-columns: 42px 42px; }
.view { position: relative; flex: 1; min-width: 0; background: #cdcdcb; border-top: 2px solid #6a6e6a; border-left: 2px solid #777; overflow: hidden; }
.scene { width: 100%; height: 100%; }
.keys { position: absolute; right: 6px; bottom: 8px; display: flex; flex-direction: column; align-items: flex-start; gap: 26px; }
kbd { height: 46px; padding: 0 9px 0 6px; color: #fff; background: #888; border-radius: 5px; box-shadow: 0 0 3px 3px rgba(0, 0, 0, .06); font: 900 32px/42px Inter, "Open Sans", sans-serif; }
kbd.faded { color: #e8e8e8; background: #979796; }
.band { position: absolute; left: 0; right: 610px; bottom: 0; height: 72px; background: rgba(0, 0, 0, .42); }

.tray { display: flex; flex-direction: column; flex: none; width: 302px; padding-left: 5px; border-left: 1px solid #fff; overflow: hidden; }
h1 { display: flex; align-items: center; flex: none; height: 27px; padding: 0 4px 2px 5px; background: linear-gradient(#bfcddb, #d3e1ef); font-size: 15px; }
.pin { width: 8px; height: 10px; margin: 0 9px 0 auto; }
.shut { width: 12px; height: 12px; background: #c04b50; color: #fff; font: 700 10px/10px "Liberation Sans", sans-serif; }
.traybody { display: flex; flex: 1; min-height: 0; padding-top: 1px; }
.panels { display: flex; flex-direction: column; flex: 1; min-width: 0; }
h2 { display: flex; align-items: center; flex: none; height: 22px; padding: 0 3px 1px 7px; background: linear-gradient(#efefef, #b3b3b3); border-left: 1px solid #bbb; font-size: 16px; line-height: 20px; }
.tri { width: 19px; font-size: 12px; }
h2 button { width: 17px; height: 17px; margin-left: auto; border: 1px solid #888; background: #eee; font: 700 13px/13px "Liberation Sans", sans-serif; }
.info { display: flex; flex: none; align-items: flex-start; height: 182px; padding: 7px 8px 0 2px; }
.info p { flex: 1; height: 26px; margin-right: 8px; padding-left: 9px; border-bottom: 1px solid #999; font: 500 12px/19px "Noto Sans CJK KR", sans-serif; }
.toggle { width: 12px; height: 18px; }
.material { display: flex; flex: none; height: 94px; padding: 3px 2px 0; border-bottom: 1px solid #999; }
.preview { width: 76px; height: 86px; padding: 5px 0; border: 1px solid #999; }
.preview svg { width: 100%; height: 74px; }
.name { width: 160px; height: 22px; margin: 0 4px; padding: 0 4px 2px; border: 1px solid #fff; border-top: 2px solid #777; border-left: 2px solid #888; background: #f0f0f0; color: #777; font: 12px/18px "Noto Sans CJK KR", sans-serif; }
.acts { display: flex; flex-direction: column; align-items: center; width: 26px; padding-top: 4px; margin-left: auto; }
.create { width: 22px; height: 22px; margin: 10px 0 6px; }
.default { width: 26px; height: 26px; }
.tabs { display: flex; flex: none; align-items: flex-end; height: 30px; padding-right: 4px; font-size: 12px; font-weight: 400; }
.tabs button { width: 46px; height: 19px; border-right: 2px solid #777; border-top: 1px solid #fff; padding: 0 14px 2px 0; line-height: 14px; }
.tabs .active { width: 51px; height: 22px; padding-bottom: 4px; border-left: 1px solid #fff; }
.tabs .ic { margin: 0 0 4px auto; }
.ic { width: 22px; height: 22px; }
.navrow { display: flex; flex: none; align-items: center; height: 36px; padding: 0 3px 2px 5px; gap: 6px; border-bottom: 1px solid #999; }
.combo { position: relative; flex: 1; height: 26px; margin: 4px 0 0; border: 1px solid #999; border-top: 2px solid #666; border-left: 2px solid #777; background: #fff; }
.combo select { appearance: none; width: 100%; height: 100%; border: 0; padding: 0 4px; background: none; color: #000; font: 12px/22px "Noto Sans CJK KR", sans-serif; }
.combo.under select { width: 126px; height: 22px; margin-left: 3px; padding: 0; border-bottom: 1px solid #000; display: block; }
.combo i { position: absolute; top: 0; right: 0; bottom: 0; width: 21px; display: flex; align-items: center; justify-content: center; background: #f0f0f0; border: 1px solid #fff; border-right: 2px solid #777; border-bottom: 2px solid #777; pointer-events: none; }
.combo i svg { width: 9px; height: 6px; }
.list { display: flex; min-height: 0; overflow: hidden; background: #fff; }
.colors { flex: 1; }
.folders { flex: none; height: 34px; }
.cells { display: grid; grid-template-columns: repeat(3, 62px); grid-auto-rows: 62px; gap: 2px; flex: 1; padding: 2px 3px; }
.cell { padding: 1px; border: 1px solid #999; background: #fff; }
.cell i { height: 100%; }
.cell svg { width: 38px; height: 38px; margin: 0 auto; }
.scroll { display: flex; flex-direction: column; align-items: center; width: 20px; background: #f1f1f1; flex: none; }
.scroll svg { width: 14px; height: 14px; margin: 4px 0 3px; }
.scroll .end { margin: auto 0 3px; }
.scroll i { width: 19px; height: 21px; background: #cdcdcd; }
.outer { width: 21px; }
.split-line { flex: none; height: 9px; border-bottom: 1px solid #999; background: linear-gradient(transparent 3px, #777 3px 5px, transparent 5px); }
h3 { flex: none; height: 22px; padding-left: 5px; background: #e4e4e4; border-bottom: 1px solid #999; font-size: 12px; line-height: 20px; font-weight: 400; }

.status { display: flex; align-items: center; flex: none; height: 29px; padding: 3px 6px 0 5px; background: #f0f0f0; border-top: 1px solid #ddd; font-size: 17px; }
.geo { width: 20px; height: 20px; margin-right: 15px; }
.bar1 { width: 1px; height: 15px; margin: 0 10px 0 -3px; background: #888; }
.bar1.push { margin: 0 12px 0 auto; }
.status label { font-size: 16px; }
.status input { width: 250px; height: 24px; margin-left: 10px; border: 1px solid #aebccc; background: #f0f0f0; font: inherit; }
</style>
